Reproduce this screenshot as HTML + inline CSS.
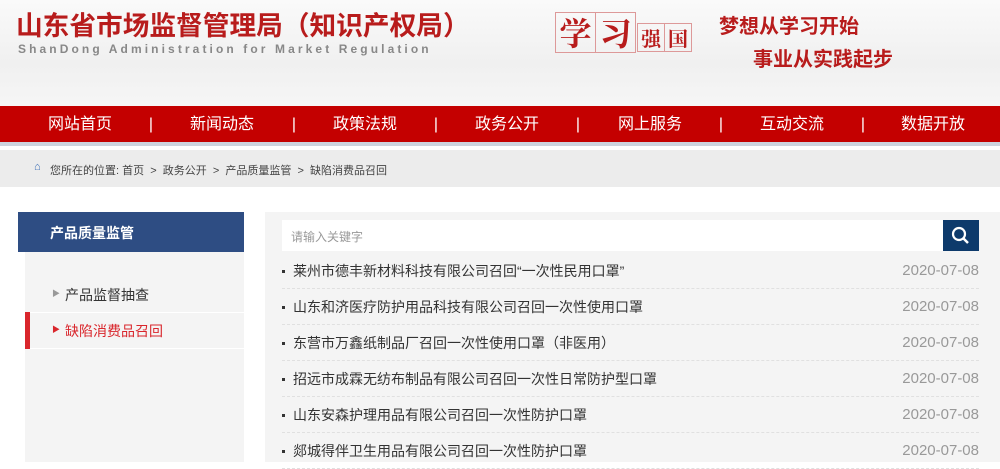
<!DOCTYPE html>
<html><head><meta charset="utf-8"><style>
*{margin:0;padding:0;box-sizing:border-box}
body{width:1000px;height:462px;overflow:hidden;background:#fff;font-family:"Liberation Sans","Noto Sans CJK SC",sans-serif;position:relative}
.hdr{position:absolute;left:0;top:0;width:1000px;height:106px;background:linear-gradient(#fafafa,#f0f0f0 60%,#f6f6f6)}
.t1{position:absolute;left:16px;top:10px;font-size:26.7px;line-height:32px;font-weight:bold;color:#b81c1c;white-space:nowrap}
.t2{position:absolute;left:18px;top:42px;font-size:12px;font-weight:bold;color:#888;letter-spacing:3.1px;white-space:nowrap}
.xx{position:absolute;left:555px;top:12px}
.xx div{position:absolute;border:1px solid #d99;color:#b81c1c;text-align:center;font-weight:bold;font-family:"Noto Serif CJK SC",serif}
.slog{position:absolute;color:#b81c1c;font-weight:bold;font-size:20px;white-space:nowrap}
.nav{position:absolute;left:0;top:106px;width:1000px;height:40px;background:#c40000;border-bottom:4px solid #cdd3de}
.nav span{position:absolute;top:9px;color:#fff;font-size:16px;line-height:20px;transform:translateX(-50%);white-space:nowrap}
.bc{position:absolute;left:0;top:150px;width:1000px;height:37px;background:#ececec;font-size:11px;color:#444;padding:12px 0 0 50px}
.side{position:absolute;left:18px;top:212px;width:226px;height:40px;background:#2e4d83;color:#fff;font-weight:bold;font-size:14px;padding:11px 0 0 32px}
.sl{position:absolute;left:25px;top:252px;width:219px;height:210px;background:#f4f4f4}
.it{position:absolute;left:0;width:219px;height:37px;font-size:14px;color:#333;padding:9px 0 0 40px}
.main{position:absolute;left:265px;top:212px;width:735px;height:250px;background:#f4f4f4}
.inp{position:absolute;left:17px;top:8px;width:661px;height:31px;background:#fff;font-size:12px;color:#999;padding:8px 0 0 9px}
.btn{position:absolute;left:678px;top:8px;width:36px;height:31px;background:#0d3a6b}
.row{position:absolute;left:17px;width:697px;height:36px;border-bottom:1px dashed #e0e0e0;font-size:14px;color:#333}
.row .t{position:absolute;left:11px;top:8px;white-space:nowrap}
.row .t:before{content:"";position:absolute;left:-11px;top:9px;width:3px;height:3px;background:#333}
.row .d{position:absolute;right:0;top:9px;color:#999;font-size:15px;line-height:18px}
</style></head><body>
<div class="hdr">
<div class="t1">山东省市场监督管理局（知识产权局）</div>
<div class="t2">ShanDong Administration for Market Regulation</div>
<div class="xx">
<div style="left:0;top:0;width:41px;height:41px;font-size:32px;line-height:38px">学</div>
<div style="left:40px;top:0;width:41px;height:41px;font-size:32px;line-height:38px">习</div>
<div style="left:82px;top:11px;width:28px;height:29px;font-size:20px;line-height:27px">强</div>
<div style="left:109px;top:11px;width:28px;height:29px;font-size:20px;line-height:27px">国</div>
</div>
<div class="slog" style="left:719px;top:10px">梦想从学习开始</div>
<div class="slog" style="left:753px;top:43px">事业从实践起步</div>
</div>
<div class="nav">
<span style="left:80px">网站首页</span><span style="left:151px">|</span>
<span style="left:222px">新闻动态</span><span style="left:294px">|</span>
<span style="left:365px">政策法规</span><span style="left:436px">|</span>
<span style="left:507px">政务公开</span><span style="left:578px">|</span>
<span style="left:650px">网上服务</span><span style="left:721px">|</span>
<span style="left:792px">互动交流</span><span style="left:863px">|</span>
<span style="left:933px">数据开放</span>
</div>
<div class="bc"><span style="color:#3a6db5;position:absolute;left:34px;top:11px">⌂</span>您所在的位置: 首页 &nbsp;&gt;&nbsp; 政务公开 &nbsp;&gt;&nbsp; 产品质量监管 &nbsp;&gt;&nbsp; 缺陷消费品召回</div>
<div class="side">产品质量监管</div>
<div class="sl">
<div class="it" style="top:24px;border-bottom:1px solid #fff"><span style="position:absolute;left:27px;top:12px;font-size:8px;color:#999">▶</span>产品监督抽查</div>
<div class="it" style="top:60px;color:#d9262c;border-bottom:1px solid #fff"><span style="position:absolute;left:0;top:0;width:5px;height:37px;background:#d9262c"></span><span style="position:absolute;left:27px;top:12px;font-size:8px">▶</span>缺陷消费品召回</div>
</div>
<div class="main">
<div class="inp">请输入关键字</div>
<div class="btn"><svg width="36" height="31"><circle cx="16" cy="14" r="6" stroke="#fff" stroke-width="2.2" fill="none"/><line x1="20.5" y1="18.5" x2="25" y2="23" stroke="#fff" stroke-width="2.5"/></svg></div>
<div class="row" style="top:41px"><span class="t">莱州市德丰新材料科技有限公司召回“一次性民用口罩”</span><span class="d">2020-07-08</span></div>
<div class="row" style="top:77px"><span class="t">山东和济医疗防护用品科技有限公司召回一次性使用口罩</span><span class="d">2020-07-08</span></div>
<div class="row" style="top:113px"><span class="t">东营市万鑫纸制品厂召回一次性使用口罩（非医用）</span><span class="d">2020-07-08</span></div>
<div class="row" style="top:149px"><span class="t">招远市成霖无纺布制品有限公司召回一次性日常防护型口罩</span><span class="d">2020-07-08</span></div>
<div class="row" style="top:185px"><span class="t">山东安森护理用品有限公司召回一次性防护口罩</span><span class="d">2020-07-08</span></div>
<div class="row" style="top:221px"><span class="t">郯城得伴卫生用品有限公司召回一次性防护口罩</span><span class="d">2020-07-08</span></div>
</div>
</body></html>
